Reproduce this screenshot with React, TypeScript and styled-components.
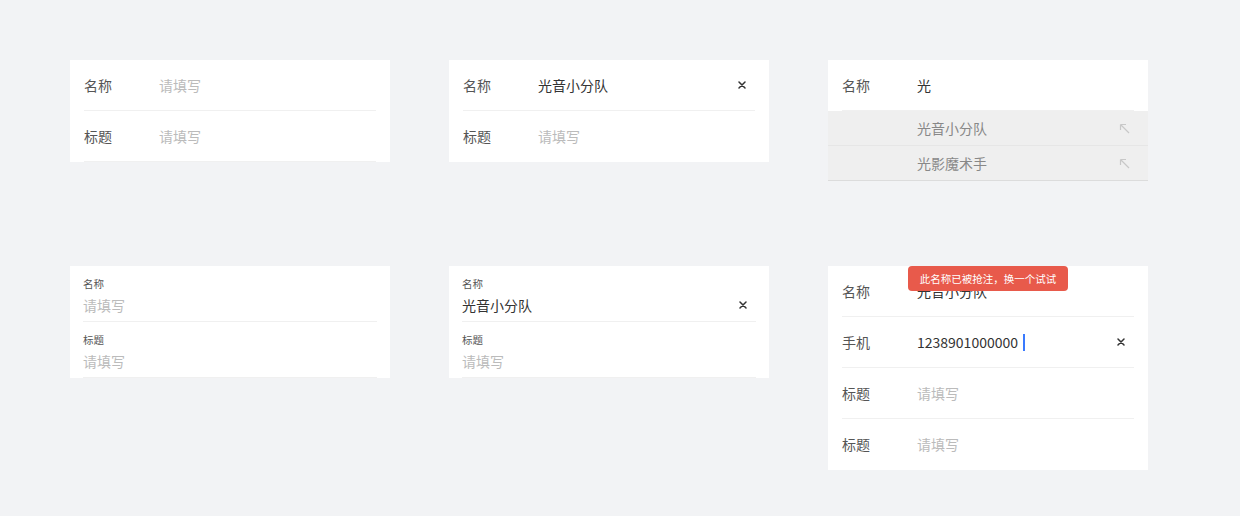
import styled, { createGlobalStyle } from 'styled-components';

const GlobalStyle = createGlobalStyle`
  html, body {
    margin: 0;
    padding: 0;
    background: #f2f3f5;
    font-family: "Noto Sans CJK SC", "Noto Sans", sans-serif;
  }
`;

const Page = styled.div`
  width: 1240px;
  height: 516px;
  box-sizing: border-box;
  padding: 60px 0 0 70px;
  display: grid;
  grid-template-columns: 320px 320px 320px;
  column-gap: 59px;
  row-gap: 85px;
  align-items: start;
  align-content: start;
`;

const Card = styled.div`
  position: relative;
  background: #fff;
  display: flex;
  flex-direction: column;
`;

const Row = styled.div<{ $noLine?: boolean }>`
  height: 51px;
  margin: 0 14px;
  display: flex;
  align-items: center;
  box-sizing: border-box;
  border-bottom: 1px solid ${p => (p.$noLine ? 'transparent' : '#f0f0f0')};
  font-size: 14px;
`;

const Label = styled.span`
  width: 75px;
  flex-shrink: 0;
  color: #555;
`;

const Value = styled.span`
  flex: 1;
  color: #333;
  display: flex;
  align-items: center;
`;

const Placeholder = styled.span`
  flex: 1;
  color: #bbb;
`;

const Clear = styled.span`
  width: 20px;
  display: flex;
  justify-content: center;
  color: #333;
  margin-right: 3px;
`;

const Cursor = styled.span`
  display: inline-block;
  width: 2px;
  height: 17px;
  background: #3a7afe;
  margin-left: 5px;
`;

const Suggest = styled.div`
  height: 35px;
  box-sizing: border-box;
  background: #efefef;
  border-bottom: 1px solid #e6e6e6;
  display: flex;
  align-items: center;
  padding: 0 18px 0 89px;
  font-size: 14px;
  color: #888;

  &:last-child {
    border-bottom-color: #dcdcdc;
  }
`;

const SuggestText = styled.span`
  flex: 1;
`;

const StackRow = styled.div`
  height: 56px;
  margin: 0 13px;
  box-sizing: border-box;
  border-bottom: 1px solid #f0f0f0;
  padding-top: 11px;
  display: flex;
  flex-direction: column;
`;

const StackLabel = styled.span`
  font-size: 10.5px;
  line-height: 14px;
  color: #555;
`;

const StackInput = styled.div`
  display: flex;
  align-items: center;
  margin-top: 4px;
  font-size: 14px;
  line-height: 20px;
`;

const Tip = styled.div`
  position: absolute;
  top: 0;
  left: 80px;
  width: 160px;
  height: 25px;
  border-radius: 4px;
  background: #e85a4b;
  color: #fff;
  font-size: 10.5px;
  display: flex;
  align-items: center;
  justify-content: center;
  z-index: 2;
`;

const X = () => (
  <svg width="8" height="8" viewBox="0 0 8 8">
    <path d="M1 1 L7 7 M7 1 L1 7" stroke="#333" strokeWidth="1.5" strokeLinecap="round" />
  </svg>
);

const Arrow = () => (
  <svg width="11" height="11" viewBox="0 0 11 11">
    <path d="M1.5 1.5 L10 10 M1.5 1.5 L1.5 7 M1.5 1.5 L7 1.5" stroke="#c8c8c8" strokeWidth="1.2" fill="none" />
  </svg>
);

export default function App() {
  return (
    <>
      <GlobalStyle />
      <Page>
        <Card>
          <Row>
            <Label>名称</Label>
            <Placeholder>请填写</Placeholder>
          </Row>
          <Row>
            <Label>标题</Label>
            <Placeholder>请填写</Placeholder>
          </Row>
        </Card>

        <Card>
          <Row>
            <Label>名称</Label>
            <Value>光音小分队</Value>
            <Clear><X /></Clear>
          </Row>
          <Row $noLine>
            <Label>标题</Label>
            <Placeholder>请填写</Placeholder>
          </Row>
        </Card>

        <Card>
          <Row>
            <Label>名称</Label>
            <Value>光</Value>
          </Row>
          <Suggest>
            <SuggestText>光音小分队</SuggestText>
            <Arrow />
          </Suggest>
          <Suggest>
            <SuggestText>光影魔术手</SuggestText>
            <Arrow />
          </Suggest>
        </Card>

        <Card>
          <StackRow>
            <StackLabel>名称</StackLabel>
            <StackInput><Placeholder>请填写</Placeholder></StackInput>
          </StackRow>
          <StackRow>
            <StackLabel>标题</StackLabel>
            <StackInput><Placeholder>请填写</Placeholder></StackInput>
          </StackRow>
        </Card>

        <Card>
          <StackRow>
            <StackLabel>名称</StackLabel>
            <StackInput>
              <Value>光音小分队</Value>
              <Clear><X /></Clear>
            </StackInput>
          </StackRow>
          <StackRow>
            <StackLabel>标题</StackLabel>
            <StackInput><Placeholder>请填写</Placeholder></StackInput>
          </StackRow>
        </Card>

        <Card>
          <Tip>此名称已被抢注，换一个试试</Tip>
          <Row>
            <Label>名称</Label>
            <Value>光音小分队</Value>
          </Row>
          <Row>
            <Label>手机</Label>
            <Value>1238901000000<Cursor /></Value>
            <Clear><X /></Clear>
          </Row>
          <Row>
            <Label>标题</Label>
            <Placeholder>请填写</Placeholder>
          </Row>
          <Row $noLine>
            <Label>标题</Label>
            <Placeholder>请填写</Placeholder>
          </Row>
        </Card>
      </Page>
    </>
  );
}
